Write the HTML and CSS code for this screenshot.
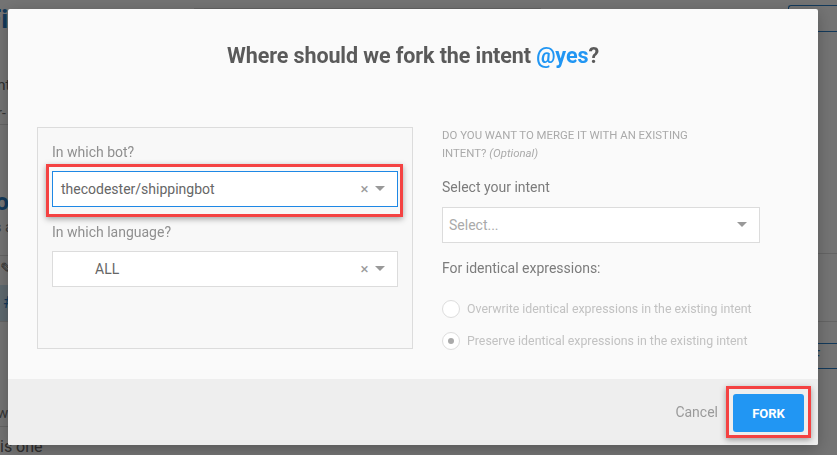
FILE: index.html
```html
<!DOCTYPE html>
<html>
<head>
<meta charset="utf-8">
<link rel="stylesheet" href="styles.css">
</head>
<body>
<div class="page">
  <div class="bg-left">
    <div class="bg-h1"><span class="shift">Fi</span></div>
    <div class="bg-sub"><span class="shift2">Intent</span></div>
    <div class="bg-sub2"><span class="shift3">user-</span></div>
    <div class="bg-rule"></div>
    <div class="bg-h2"><span class="shift4">Bot</span></div>
    <div class="bg-desc"><span class="shift5">is a</span></div>
    <div class="bg-rule"></div>
    <div class="bg-tools">✎</div>
    <div class="bg-tag">#</div>
    <div class="bg-rule"></div>
    <div class="bg-w"><span class="shift6">w</span></div>
    <div class="bg-rule"></div>
    <div class="bg-last">is one</div>
  </div>
  <div class="bg-mid"><div class="bg-search"></div></div>
  <div class="bg-right">
    <div class="bg-fork">FORK</div>
    <div class="bg-rule2"></div>
    <div class="bg-rule3"></div>
    <div class="bg-btn">↻ F</div>
  </div>
</div>

<div class="overlay">
  <div class="dialog">
    <div class="dialog-body">
      <h1 class="title">Where should we fork the intent <span class="accent">@yes</span>?</h1>
      <div class="content">
        <div class="panel">
          <div class="label">In which bot?</div>
          <div class="select-wrap">
            <div class="select focused">
              <span class="value">thecodester/shippingbot</span>
              <span class="clear">×</span>
              <span class="arrow"></span>
            </div>
            <div class="annot annot-select"></div>
          </div>
          <div class="label second">In which language?</div>
          <div class="select">
            <span class="value lang">ALL</span>
            <span class="clear">×</span>
            <span class="arrow"></span>
          </div>
        </div>
        <div class="side">
          <div class="heading">DO YOU WANT TO MERGE IT WITH AN EXISTING INTENT? <em>(Optional)</em></div>
          <div class="label side-label">Select your intent</div>
          <div class="select">
            <span class="value placeholder">Select...</span>
            <span class="arrow"></span>
          </div>
          <div class="label side-label">For identical expressions:</div>
          <div class="radios">
            <div class="radio-row"><span class="radio"></span><span class="radio-text">Overwrite identical expressions in the existing intent</span></div>
            <div class="radio-row"><span class="radio checked"></span><span class="radio-text">Preserve identical expressions in the existing intent</span></div>
          </div>
        </div>
      </div>
    </div>
    <div class="dialog-footer">
      <span class="cancel">Cancel</span>
      <div class="btn-wrap">
        <button class="fork">FORK</button>
        <div class="annot annot-btn"></div>
      </div>
    </div>
  </div>
</div>
</body>
</html>
```

FILE: styles.css
```css
* { box-sizing: border-box; }
html, body { margin: 0; padding: 0; }
body {
  width: 837px;
  height: 455px;
  overflow: hidden;
  font-family: Roboto, "Liberation Sans", Arial, sans-serif;
  background: #ffffff;
}

/* background page (dimmed by overlay) */
.page {
  display: flex;
  width: 837px;
  height: 455px;
  overflow: hidden;
  background: #fff;
  color: #555;
}
.bg-left { width: 190px; flex: none; overflow: hidden; }
.bg-mid { flex: 1; padding: 8px 0 0 4px; }
.bg-right { width: 49px; flex: none; padding-top: 5px; overflow: hidden; }
.bg-h1 { height: 40px; font-size: 26px; font-weight: 700; color: #2a7fc8; line-height: 38px; }
.shift { margin-left: -13px; }
.bg-sub { height: 50px; padding-top: 36px; font-size: 15px; line-height: 18px; color: #666; }
.shift2 { margin-left: -28px; }
.bg-sub2 { height: 34px; padding-top: 14px; font-size: 14px; line-height: 18px; color: #777; }
.shift3 { margin-left: -25px; }
.bg-rule { height: 1px; background: #ddd; }
.bg-h2 { padding-top: 62px; height: 92px; font-size: 24px; font-weight: 700; color: #2a7fc8; line-height: 30px; }
.shift4 { margin-left: -20px; }
.bg-desc { height: 38px; font-size: 15px; line-height: 20px; color: #888; }
.shift5 { margin-left: -10px; }
.bg-tools { height: 27px; font-size: 16px; line-height: 26px; color: #666; }
.bg-tag { height: 36px; margin-top: 2px; background: #cfe7f5; color: #2a7fc8; line-height: 36px; font-size: 16px; padding-left: 3px; }
.bg-w { height: 104px; padding-top: 82px; font-size: 15px; line-height: 18px; color: #777; }
.shift6 { margin-left: -3px; }
.bg-last { padding-top: 10px; font-size: 16px; line-height: 20px; color: #666; }
.bg-search { width: 347px; height: 30px; border: 1px solid #ddd; }
.bg-fork {
  height: 27px; border: 1px solid #2a7fc8; border-right: none; border-radius: 3px 0 0 3px;
  color: #2a7fc8; font-size: 13px; font-weight: 700; line-height: 25px; text-indent: -4px; overflow: hidden;
}
.bg-rule2 { height: 1px; background: #ddd; margin-top: 221px; }
.bg-rule3 { height: 1px; background: #ddd; margin-top: 67px; }
.bg-btn {
  margin-top: 21px; height: 26px; border: 1px solid #2a7fc8; border-right: none;
  color: #2a7fc8; font-size: 14px; line-height: 24px; padding-left: 8px;
}

/* overlay + dialog */
.overlay {
  position: fixed;
  inset: 0;
  background: rgba(0, 0, 0, 0.55);
  padding: 9px 0 0 8px;
}
.dialog {
  width: 810px;
  height: 436px;
  background: #fafafa;
  border-radius: 2px;
  box-shadow: 0 4px 16px rgba(0, 0, 0, 0.25);
  display: flex;
  flex-direction: column;
  overflow: hidden;
}
.dialog-body { height: 370px; padding-top: 32px; }
.title {
  margin: 0;
  text-align: center;
  font-size: 21.5px;
  line-height: 30px;
  font-weight: 700;
  color: #5a5a5a;
  letter-spacing: -0.1px;
}
.accent { color: #2196f3; }
.content {
  display: flex;
  align-items: flex-start;
  gap: 29px;
  padding-left: 29px;
  margin-top: 56px;
}
.panel {
  width: 376px;
  height: 222px;
  border: 1px solid #dcdcdc;
  background: #f8f8f8;
  padding: 14px 14px 0 14px;
}
.label {
  font-size: 14px;
  line-height: 20px;
  color: #8f8f8f;
  margin-bottom: 9px;
}
.label.second { margin-top: 15px; }
.select-wrap { position: relative; }
.select {
  position: relative;
  height: 36px;
  background: #fff;
  border: 1px solid #dcdcdc;
  display: flex;
  align-items: center;
  padding-left: 8px;
}
.select.focused { border-color: #1e88e5; }
.value { flex: 1; font-size: 14px; color: #666; }
.value.lang { padding-left: 34px; }
.value.placeholder { color: #aaa; }
.clear {
  width: 17px;
  text-align: center;
  font-size: 15px;
  color: #9a9a9a;
  margin-right: 2px;
  line-height: 1;
}
.arrow {
  width: 0; height: 0;
  border-left: 5px solid transparent;
  border-right: 5px solid transparent;
  border-top: 5px solid #999;
  margin-right: 12px;
  margin-top: -1px;
}
.annot {
  position: absolute;
  border: 3px solid #f44242;
  box-shadow: 0 2px 6px rgba(0, 0, 0, 0.35);
  pointer-events: none;
}
.annot-select { left: -6px; right: -5px; top: -7px; bottom: -10px; }

.side { width: 318px; margin-top: -1px; }
.heading {
  max-width: 290px;
  font-size: 11.4px;
  line-height: 18px;
  color: #aaa;
}
.side-label { margin-top: 15px; color: #7c7c7c; margin-bottom: 10px; }
.side .select { padding-left: 6px; }
.radios { margin-top: 15px; }
.radio-row { height: 32px; display: flex; align-items: center; }
.radio {
  width: 18px; height: 18px;
  border-radius: 50%;
  border: 1px solid #ddd;
  background: #fff;
  display: flex;
  align-items: center;
  justify-content: center;
  margin-right: 7px;
  flex: none;
}
.radio.checked::after {
  content: "";
  width: 6px; height: 6px;
  border-radius: 50%;
  background: #aaa;
}
.radio-text { font-size: 12.35px; color: #c2c2c2; }

.dialog-footer {
  height: 66px;
  background: #eeeeee;
  display: flex;
  justify-content: flex-end;
  align-items: center;
  gap: 15px;
  padding-right: 14px;
}
.cancel { font-size: 14px; color: #9a9a9a; }
.btn-wrap { position: relative; margin-top: 2px; }
.fork {
  display: block;
  width: 71px;
  height: 38px;
  border: none;
  border-radius: 3px;
  background: #2196f3;
  color: #fff;
  font-family: Roboto, "Liberation Sans", Arial, sans-serif;
  font-size: 13px;
  font-weight: 700;
}
.annot-btn { left: -7px; right: -7px; top: -8px; bottom: -6px; }
```
